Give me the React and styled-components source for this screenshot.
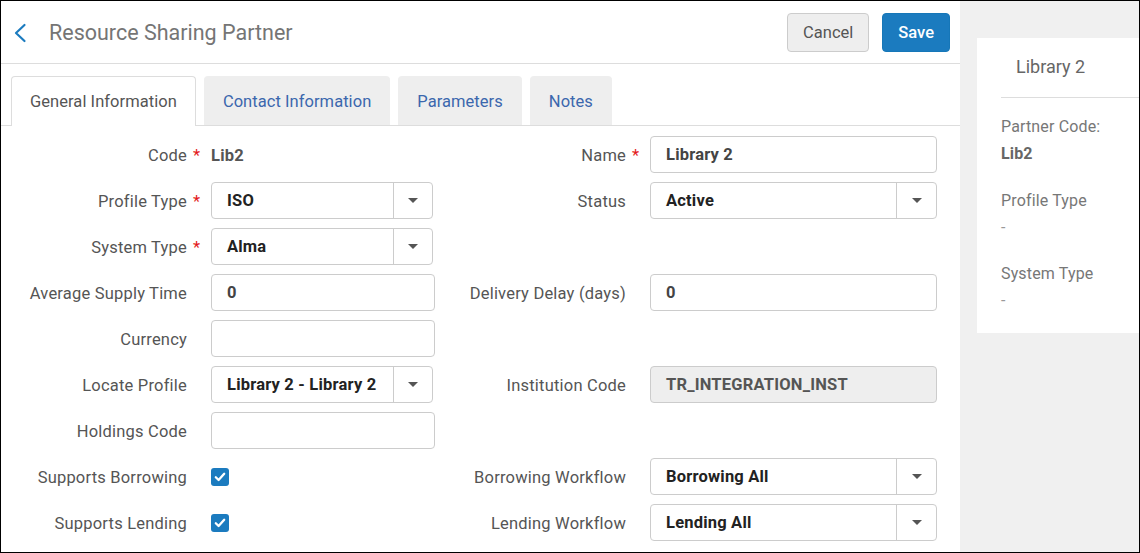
import styled, { createGlobalStyle } from "styled-components"

const GlobalStyle = createGlobalStyle`
	body {
		margin: 0;
		font-family: Roboto, "Liberation Sans", sans-serif;
		background: #fff;
	}
`

const Frame = styled.div`
	width: 1140px;
	height: 553px;
	box-sizing: border-box;
	border: 1px solid #000;
	display: flex;
	overflow: hidden;
	background: #fff;
`

const Main = styled.div`
	width: 959px;
	display: flex;
	flex-direction: column;
`

const Header = styled.div`
	height: 63px;
	box-sizing: border-box;
	border-bottom: 1px solid #ddd;
	display: flex;
	align-items: center;
	padding: 1px 10px 0 12px;
`

const BackButton = styled.button`
	border: none;
	background: none;
	padding: 0;
	display: flex;
	cursor: pointer;
`

const Title = styled.h1`
	margin: 0 0 0 22px;
	font-size: 21.5px;
	font-weight: 400;
	color: #757575;
`

const Actions = styled.div`
	margin-left: auto;
	display: flex;
	gap: 13px;
`

const Button = styled.button`
	height: 39px;
	padding: 0 15px;
	border-radius: 4px;
	font-family: Roboto, "Liberation Sans", sans-serif;
	font-size: 16.5px;
	border: 1px solid ${(p) => (p.$primary ? "#1677b8" : "#ccc")};
	background: ${(p) => (p.$primary ? "#1b7bbf" : "#eee")};
	color: ${(p) => (p.$primary ? "#fff" : "#555")};
	font-weight: ${(p) => (p.$primary ? 500 : 400)};
`

const TabBar = styled.div`
	display: flex;
	align-items: flex-end;
	gap: 8px;
	padding: 12px 0 0 10px;
	border-bottom: 1px solid #ddd;
`

const Tab = styled.div`
	box-sizing: border-box;
	display: flex;
	align-items: center;
	padding: 0 18px;
	border-radius: 4px 4px 0 0;
	font-size: 16.5px;
	letter-spacing: 0.05px;
	border: 1px solid ${(p) => (p.$active ? "#ddd" : "#eee")};
	border-bottom: none;
	background: ${(p) => (p.$active ? "#fff" : "#eee")};
	color: ${(p) => (p.$active ? "#555" : "#3b67ad")};
	margin-bottom: ${(p) => (p.$active ? "-1px" : "0")};
	height: ${(p) => (p.$active ? "50px" : "49px")};
`

const Form = styled.div`
	display: flex;
	flex-direction: column;
	gap: 9px;
	padding-top: 10px;
`

const Row = styled.div`
	display: grid;
	grid-template-columns: 186px 24px 224px 191px 24px 287px;
	height: 37px;
	align-items: center;
	font-size: 16.5px;
	letter-spacing: 0.2px;
`

const Label = styled.div`
	text-align: right;
	color: #555;
	white-space: nowrap;
	padding-top: 1px;
`

const Star = styled.div`
	padding-left: 6px;
	color: #e3191b;
	padding-top: 1px;
`

const Value = styled.div`
	font-weight: 700;
	color: #555;
	padding-top: 2px;
`

const Input = styled.div`
	height: 37px;
	box-sizing: border-box;
	border: 1px solid #ccc;
	border-radius: 4px;
	display: flex;
	align-items: center;
	padding-left: 15px;
	font-weight: 700;
	color: ${(p) => p.$color || "#444"};
	background: ${(p) => (p.$disabled ? "#eee" : "#fff")};
`

const Select = styled.div`
	width: ${(p) => p.$width}px;
	height: 37px;
	box-sizing: border-box;
	border: 1px solid #ccc;
	border-radius: 4px;
	display: flex;
`

const SelectValue = styled.div`
	flex: 1;
	display: flex;
	align-items: center;
	padding-left: 15px;
	font-weight: 700;
	color: #222;
`

const SelectAddon = styled.div`
	width: ${(p) => p.$width}px;
	border-left: 1px solid #ccc;
	display: flex;
	align-items: center;
	justify-content: center;
`

const Caret = styled.span`
	width: 0;
	height: 0;
	border-left: 5px solid transparent;
	border-right: 5px solid transparent;
	border-top: 5px solid #555;
`

const Checkbox = styled.div`
	width: 18px;
	height: 18px;
	border-radius: 3px;
	background: #1b7bbf;
	display: flex;
	align-items: center;
	justify-content: center;
`

const Sidebar = styled.div`
	flex: 1;
	background: #f0f0f0;
	padding: 37px 0 0 17px;
`

const Card = styled.div`
	background: #fff;
	height: 295px;
	padding-left: 24px;
`

const CardTitle = styled.div`
	height: 60px;
	box-sizing: border-box;
	border-bottom: 1px solid #ddd;
	display: flex;
	align-items: center;
	padding: 0 0 3px 15px;
	font-size: 18px;
	color: #666;
`

const InfoGroup = styled.div`
	margin-top: ${(p) => (p.$first ? "15px" : "19.5px")};
	line-height: 27px;
	font-size: 16px;
	letter-spacing: 0.15px;
`

const InfoLabel = styled.div`
	color: #777;
`

const InfoValue = styled.div`
	color: ${(p) => (p.$bold ? "#666" : "#999")};
	font-weight: ${(p) => (p.$bold ? 700 : 400)};
`

function Control({ field }) {
	if (field.type === "text") return <Value>{field.value}</Value>
	if (field.type === "check")
		return (
			<Checkbox>
				<svg width="12" height="12" viewBox="0 0 12 12">
					<path d="M1.8 6.2 L4.6 9 L10.2 2.8" fill="none" stroke="#fff" strokeWidth="2.3" strokeLinecap="round" strokeLinejoin="round" />
				</svg>
			</Checkbox>
		)
	if (field.type === "select")
		return (
			<Select $width={field.width}>
				<SelectValue>{field.value}</SelectValue>
				<SelectAddon $width={field.addon}>
					<Caret />
				</SelectAddon>
			</Select>
		)
	return (
		<Input $disabled={field.disabled} $color={field.color}>
			{field.value}
		</Input>
	)
}

function Field({ field }) {
	if (!field) return null
	return (
		<>
			<Label>{field.label}</Label>
			<Star>{field.required ? "*" : ""}</Star>
			<Control field={field} />
		</>
	)
}

const leftSelect = { type: "select", width: 222, addon: 38 }
const rightSelect = { type: "select", width: 287, addon: 39 }

const rows = [
	[
		{ label: "Code", required: true, type: "text", value: "Lib2" },
		{ label: "Name", required: true, type: "input", value: "Library 2", color: "#444" },
	],
	[
		{ ...leftSelect, label: "Profile Type", required: true, value: "ISO" },
		{ ...rightSelect, label: "Status", value: "Active" },
	],
	[{ ...leftSelect, label: "System Type", required: true, value: "Alma" }, null],
	[
		{ label: "Average Supply Time", type: "input", value: "0" },
		{ label: "Delivery Delay (days)", type: "input", value: "0" },
	],
	[{ label: "Currency", type: "input", value: "" }, null],
	[
		{ ...leftSelect, label: "Locate Profile", value: "Library 2 - Library 2" },
		{ label: "Institution Code", type: "input", value: "TR_INTEGRATION_INST", disabled: true, color: "#555" },
	],
	[{ label: "Holdings Code", type: "input", value: "" }, null],
	[
		{ label: "Supports Borrowing", type: "check" },
		{ ...rightSelect, label: "Borrowing Workflow", value: "Borrowing All" },
	],
	[
		{ label: "Supports Lending", type: "check" },
		{ ...rightSelect, label: "Lending Workflow", value: "Lending All" },
	],
]

const tabs = ["General Information", "Contact Information", "Parameters", "Notes"]

const summary = [
	{ label: "Partner Code:", value: "Lib2", bold: true },
	{ label: "Profile Type", value: "-" },
	{ label: "System Type", value: "-" },
]

function App() {
	return (
		<Frame>
			<GlobalStyle />
			<Main>
				<Header>
					<BackButton>
						<svg width="14" height="20" viewBox="0 0 14 20">
							<path d="M11.5 2 L3 10 L11.5 18" fill="none" stroke="#1b7bbf" strokeWidth="2.2" strokeLinecap="round" strokeLinejoin="round" />
						</svg>
					</BackButton>
					<Title>Resource Sharing Partner</Title>
					<Actions>
						<Button>Cancel</Button>
						<Button $primary>Save</Button>
					</Actions>
				</Header>
				<TabBar>
					{tabs.map((tab, i) => (
						<Tab key={tab} $active={i === 0}>
							{tab}
						</Tab>
					))}
				</TabBar>
				<Form>
					{rows.map(([left, right], i) => (
						<Row key={i}>
							<Field field={left} />
							<Field field={right} />
						</Row>
					))}
				</Form>
			</Main>
			<Sidebar>
				<Card>
					<CardTitle>Library 2</CardTitle>
					{summary.map((item, i) => (
						<InfoGroup key={item.label} $first={i === 0}>
							<InfoLabel>{item.label}</InfoLabel>
							<InfoValue $bold={item.bold}>{item.value}</InfoValue>
						</InfoGroup>
					))}
				</Card>
			</Sidebar>
		</Frame>
	)
}

export default App
